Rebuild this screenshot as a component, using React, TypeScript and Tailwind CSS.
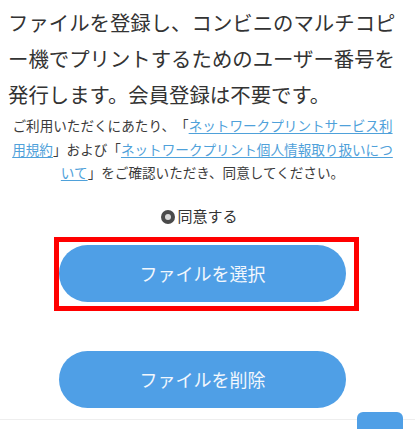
export default function App() {
  const font = { fontFamily: '"Noto Sans CJK JP", "Noto Sans", sans-serif' };
  return (
    <div
      lang="ja"
      className="relative h-[429px] overflow-hidden bg-white text-[#333] [text-spacing-trim:space-all]"
      style={font}
    >
      <div className="pl-2 pr-[18px] pt-[4px]">
        <p className="text-[20.4px] leading-[36px] whitespace-nowrap">
          ファイルを登録し、コンビニのマルチコピ
          <br />
          ー機でプリントするためのユーザー番号を
          <br />
          発行します。会員登録は不要です。
        </p>
        <p className="mt-[2px] text-center text-[13.6px] leading-[23.5px] whitespace-nowrap text-[#3a3a3a]">
          ご利用いただくにあたり、「
          <a href="#" className="text-[#4fa1da] underline underline-offset-2">
            ネットワークプリントサービス利
            <br />
            用規約
          </a>
          」および「
          <a href="#" className="text-[#4fa1da] underline underline-offset-2">
            ネットワークプリント個人情報取り扱いにつ
            <br />
            いて
          </a>
          」をご確認いただき、同意してください。
        </p>
      </div>

      <label className="mt-[20px] flex h-6 items-center justify-center pr-[16px] text-[15px] text-[#333]">
        <span className="mr-[2px] flex h-[14px] w-[14px] items-center justify-center rounded-full bg-[#4a4a4a]">
          <span className="h-[6px] w-[6px] rounded-full bg-[#d8d8d8]" />
        </span>
        同意する
      </label>

      <div className="ml-[54px] mt-[8px] h-[74px] w-[305px] border-[5px] border-[#ff0000] pt-[3px]">
        <button className="flex h-[57px] w-[287px] items-center justify-center rounded-full bg-[#4f9fe6] text-[18px] text-[#f2f7fd]">
          ファイルを選択
        </button>
      </div>

      <button className="ml-[59px] mt-[40px] flex h-[57px] w-[287px] items-center justify-center rounded-full bg-[#4f9fe6] text-[18px] text-[#f2f7fd]">
        ファイルを削除
      </button>

      <div className="mt-[11px] border-t border-[#eeeeee]" />

      <div className="absolute left-[357px] top-[412px] h-[30px] w-[46px] rounded-[6px] bg-[#4f9fe6]" />
    </div>
  );
}
